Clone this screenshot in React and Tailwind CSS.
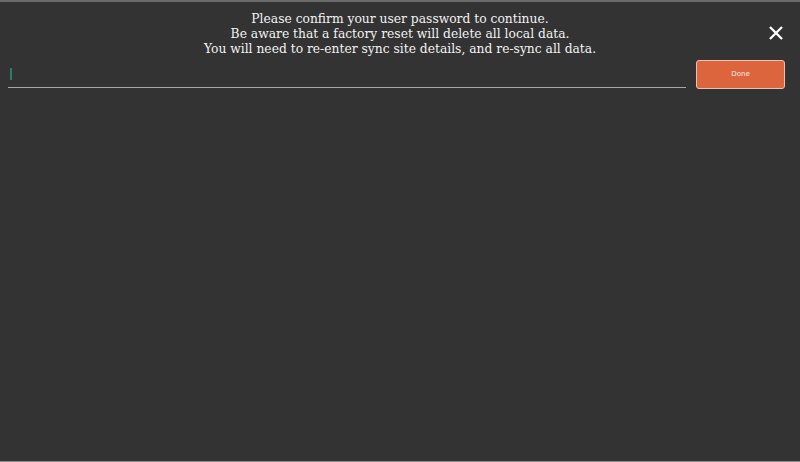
import { useState } from "react";

export default function App() {
    const [password, setPassword] = useState("");

    return (
        <div
            className="w-[800px] h-[462px] bg-[#333333] border-t-2 border-t-[#6b6b6b] border-b border-b-[#8a8a8a] flex flex-col text-[#f2f2f2]"
            style={{ fontFamily: '"DejaVu Serif", serif' }}
        >
            <div className="relative pt-[10px] text-center text-[12.3px] leading-[15px]">
                <p>Please confirm your user password to continue.</p>
                <p>Be aware that a factory reset will delete all local data.</p>
                <p>You will need to re-enter sync site details, and re-sync all data.</p>
                <button className="absolute right-[16px] top-[23px] w-[16px] h-[16px] flex items-center justify-center">
                    <svg viewBox="0 0 16 16" className="w-[14px] h-[14px]" fill="none" stroke="#ffffff" strokeWidth={2.6} strokeLinecap="square">
                        <path d="M2 2L14 14M14 2L2 14" />
                    </svg>
                </button>
            </div>
            <div className="flex items-end gap-[10px] pl-[8px] pr-[15px] mt-[3px]">
                <div className="flex-1 h-[28px] flex items-center border-b border-b-[#a8a8a8] pl-[2px]">
                    {/* caret as it shows while the field has focus */}
                    {password === "" && <span className="w-[2px] h-[12px] bg-[#2f7a68]" />}
                    <input
                        type="password"
                        value={password}
                        onChange={(e) => setPassword(e.target.value)}
                        className="flex-1 h-full bg-transparent outline-none caret-[#2f7a68] text-sm"
                    />
                </div>
                <button
                    className="w-[89px] h-[29px] mb-[-1px] bg-[#dc653e] border border-[#e8c3b4] rounded-[3px] text-[7px] text-[#fbe9e2]"
                    style={{ fontFamily: '"DejaVu Sans", sans-serif' }}
                >
                    Done
                </button>
            </div>
        </div>
    );
}
